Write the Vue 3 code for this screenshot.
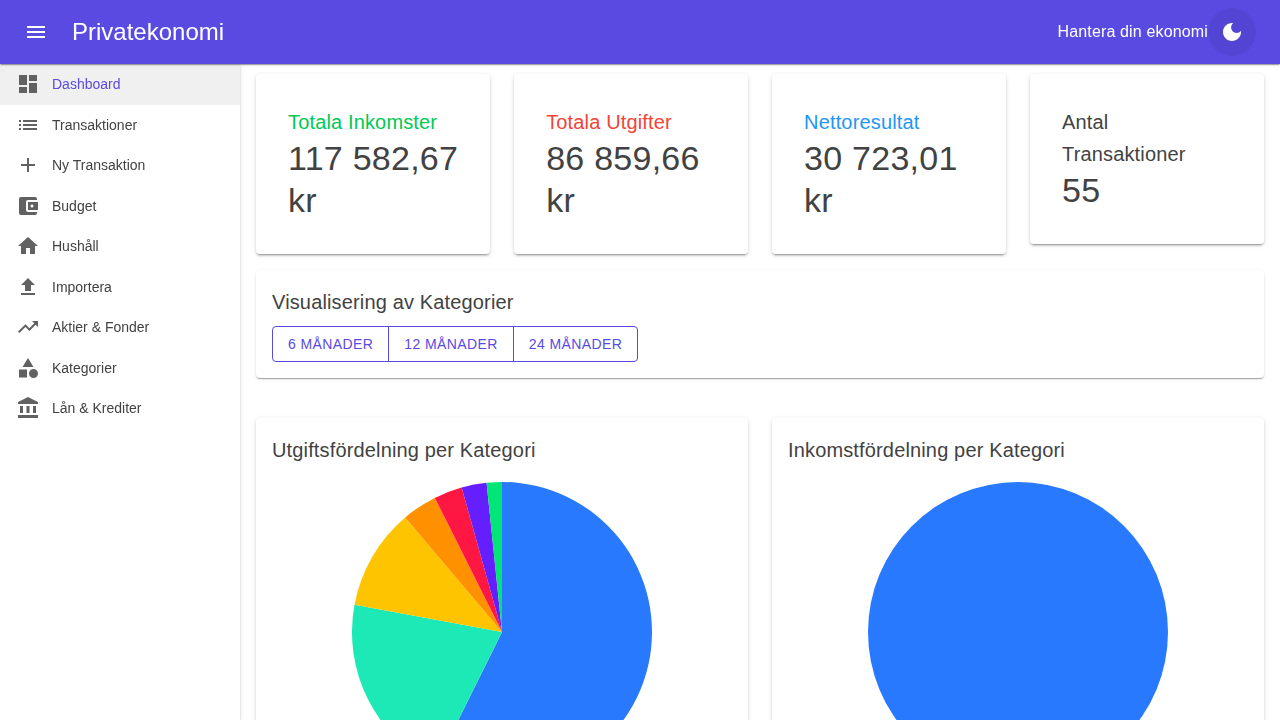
<script setup>
const navItems = [
  { label: 'Dashboard', active: true, path: 'M3 13h8V3H3v10zm0 8h8v-6H3v6zm10 0h8V11h-8v10zm0-18v6h8V3h-8z' },
  { label: 'Transaktioner', path: 'M3 13h2v-2H3v2zm0 4h2v-2H3v2zm0-8h2V7H3v2zm4 4h14v-2H7v2zm0 4h14v-2H7v2zM7 7v2h14V7H7z' },
  { label: 'Ny Transaktion', path: 'M19 13h-6v6h-2v-6H5v-2h6V5h2v6h6v2z' },
  { label: 'Budget', path: 'M21 18v1c0 1.1-.9 2-2 2H5c-1.11 0-2-.9-2-2V5c0-1.1.89-2 2-2h14c1.1 0 2 .9 2 2v1h-9c-1.11 0-2 .9-2 2v8c0 1.1.89 2 2 2h9zm-9-2h10V8H12v8zm4-2.5c-.83 0-1.5-.67-1.5-1.5s.67-1.5 1.5-1.5 1.5.67 1.5 1.5-.67 1.5-1.5 1.5z' },
  { label: 'Hushåll', path: 'M10 20v-6h4v6h5v-8h3L12 3 2 12h3v8z' },
  { label: 'Importera', path: 'M5 20h14v-2H5v2zM5 10h4v6h6v-6h4l-7-7-7 7z' },
  { label: 'Aktier & Fonder', path: 'M16 6l2.29 2.29-4.88 4.88-4-4L2 16.59 3.41 18l6-6 4 4 6.3-6.29L22 12V6z' },
  { label: 'Kategorier', path: 'M12 2l-5.5 9h11zM17.5 13a4.5 4.5 0 1 0 0 9 4.5 4.5 0 1 0 0-9zM3 13.5h8v8H3z' },
  { label: 'Lån & Krediter', path: 'M4 10h3v7H4zM10.5 10h3v7h-3zM2 19h20v3H2zM17 10h3v7h-3zM12 1 2 6v2h20V6z' },
]

const stats = [
  { title: 'Totala Inkomster', value: '117\u00a0582,67 kr', tone: 'success' },
  { title: 'Totala Utgifter', value: '86\u00a0859,66 kr', tone: 'error' },
  { title: 'Nettoresultat', value: '30\u00a0723,01 kr', tone: 'info' },
  { title: 'Antal Transaktioner', value: '55', tone: 'plain' },
]

const periods = ['6 månader', '12 månader', '24 månader']

// End angle of each slice, in degrees clockwise from the top.
const slices = [
  { color: '#2979ff', end: 206.4 },
  { color: '#1de9b6', end: 280.5 },
  { color: '#ffc400', end: 319.8 },
  { color: '#ff9100', end: 333.4 },
  { color: '#ff1744', end: 344.4 },
  { color: '#651fff', end: 354.1 },
  { color: '#00e676', end: 360 },
]

function point(deg) {
  const a = (deg * Math.PI) / 180
  return `${(150 + 150 * Math.sin(a)).toFixed(3)} ${(150 - 150 * Math.cos(a)).toFixed(3)}`
}

const wedges = slices.map((s, i) => {
  const start = i ? slices[i - 1].end : 0
  const large = s.end - start > 180 ? 1 : 0
  return { color: s.color, d: `M150 150L${point(start)}A150 150 0 ${large} 1 ${point(s.end)}Z` }
})
</script>

<template>
  <div class="layout">
    <header class="appbar">
      <button class="icon-btn menu-btn" aria-label="Meny">
        <svg class="icon" viewBox="0 0 24 24"><path d="M3 18h18v-2H3v2zm0-5h18v-2H3v2zm0-7v2h18V6H3z" /></svg>
      </button>
      <h1 class="brand">Privatekonomi</h1>
      <span class="tagline">Hantera din ekonomi</span>
      <button class="icon-btn theme-btn" aria-label="Mörkt läge">
        <svg class="icon" viewBox="0 0 24 24"><path d="M12 3c-4.97 0-9 4.03-9 9s4.03 9 9 9 9-4.03 9-9c0-.46-.04-.92-.1-1.36-.98 1.37-2.58 2.26-4.4 2.26-2.98 0-5.4-2.42-5.4-5.4 0-1.81.89-3.42 2.26-4.4-.44-.06-.9-.1-1.36-.1z" /></svg>
      </button>
    </header>
    <div class="body">
      <nav class="drawer">
        <a v-for="item in navItems" :key="item.label" class="nav-link" :class="{ active: item.active }">
          <svg class="icon nav-icon" viewBox="0 0 24 24"><path :d="item.path" /></svg>
          <span class="nav-text">{{ item.label }}</span>
        </a>
      </nav>
      <main class="content">
        <section class="stats">
          <article v-for="s in stats" :key="s.title" class="paper raised stat">
            <h2 class="h6" :class="s.tone">{{ s.title }}</h2>
            <p class="h4">{{ s.value }}</p>
          </article>
        </section>
        <section class="paper panel filter">
          <h2 class="h6">Visualisering av Kategorier</h2>
          <div class="btn-group">
            <button v-for="p in periods" :key="p" class="period">{{ p }}</button>
          </div>
        </section>
        <section class="charts">
          <article class="paper raised panel">
            <h2 class="h6">Utgiftsfördelning per Kategori</h2>
            <svg class="pie" viewBox="0 0 300 300">
              <path v-for="w in wedges" :key="w.color" :d="w.d" :fill="w.color" />
            </svg>
          </article>
          <article class="paper raised panel">
            <h2 class="h6">Inkomstfördelning per Kategori</h2>
            <svg class="pie" viewBox="0 0 300 300">
              <circle cx="150" cy="150" r="150" fill="#2979ff" />
            </svg>
          </article>
        </section>
      </main>
    </div>
  </div>
</template>

<style>
body {
  background: #fff;
}
</style>

<style scoped>
.layout {
  height: 100vh;
  overflow: hidden;
  display: flex;
  flex-direction: column;
  background: #fff;
  color: #424242;
  font-family: Arial, "Liberation Sans", sans-serif;
}
h1, h2, p {
  margin: 0;
  font-weight: 400;
}
button {
  font-family: inherit;
  margin: 0;
  border: 0;
  background: none;
}
.icon {
  width: 24px;
  height: 24px;
  fill: currentColor;
  flex: none;
}
.appbar,
.paper {
  box-shadow: 0 2px 1px -1px rgba(0, 0, 0, 0.2), 0 1px 1px 0 rgba(0, 0, 0, 0.14), 0 1px 3px 0 rgba(0, 0, 0, 0.12);
}
.drawer,
.raised {
  box-shadow: 0 3px 1px -2px rgba(0, 0, 0, 0.2), 0 2px 2px 0 rgba(0, 0, 0, 0.14), 0 1px 5px 0 rgba(0, 0, 0, 0.12);
}
.appbar {
  position: relative;
  z-index: 2;
  will-change: transform;
  flex: none;
  box-sizing: border-box;
  height: 64px;
  padding: 0 24px;
  display: flex;
  align-items: center;
  background: #594ae2;
  color: #fff;
}
.icon-btn {
  display: flex;
  padding: 12px;
  border-radius: 50%;
  color: #fff;
}
.menu-btn {
  margin-left: -12px;
}
.theme-btn {
  background: rgba(0, 0, 0, 0.06);
}
.brand {
  margin-left: 12px;
  font-size: 24px;
  line-height: 1.334;
}
.tagline {
  margin-left: auto;
  font-size: 16px;
  line-height: 1.5;
  letter-spacing: 0.00938em;
}
.body {
  flex: 1;
  min-height: 0;
  display: flex;
}
.drawer {
  flex: none;
  width: 240px;
  will-change: transform;
  background: #fff;
}
.nav-link {
  display: flex;
  align-items: center;
  padding: 8px 16px;
  font-size: 14px;
  line-height: 1.75;
}
.nav-icon {
  color: #616161;
}
.nav-text {
  margin-left: 12px;
}
.active {
  background: rgba(0, 0, 0, 0.06);
}
.active .nav-text {
  color: #594ae2;
}
.content {
  flex: 1;
  min-width: 0;
  padding: 10px 16px 0;
}
.paper {
  background: #fff;
  border-radius: 4px;
}
.paper.raised {
  box-shadow: 0 3px 1px -2px rgba(0, 0, 0, 0.2), 0 2px 2px 0 rgba(0, 0, 0, 0.14), 0 1px 5px 0 rgba(0, 0, 0, 0.12);
}
.stats {
  display: grid;
  grid-template-columns: repeat(4, 1fr);
  gap: 24px;
  align-items: start;
}
.stat {
  padding: 32px;
}
.h6 {
  font-size: 20px;
  line-height: 1.6;
  letter-spacing: 0.0075em;
}
.h4 {
  font-size: 34px;
  line-height: 1.235;
  letter-spacing: 0.00735em;
}
.success { color: #00c853; }
.error { color: #f44336; }
.info { color: #2196f3; }
.panel {
  padding: 16px;
}
.filter {
  margin-top: 16px;
}
.btn-group {
  display: inline-flex;
  margin-top: 8px;
  border: 1px solid #594ae2;
  border-radius: 4px;
  vertical-align: top;
}
.period {
  padding: 5px 15px;
  color: #594ae2;
  font-size: 14px;
  font-weight: 500;
  line-height: 1.75;
  letter-spacing: 0.02857em;
  text-transform: uppercase;
}
.period + .period {
  border-left: 1px solid #594ae2;
}
.charts {
  display: grid;
  grid-template-columns: 1fr 1fr;
  gap: 24px;
  margin-top: 40px;
}
.pie {
  display: block;
  width: 300px;
  height: 300px;
  margin: 16px auto 0;
}
</style>
